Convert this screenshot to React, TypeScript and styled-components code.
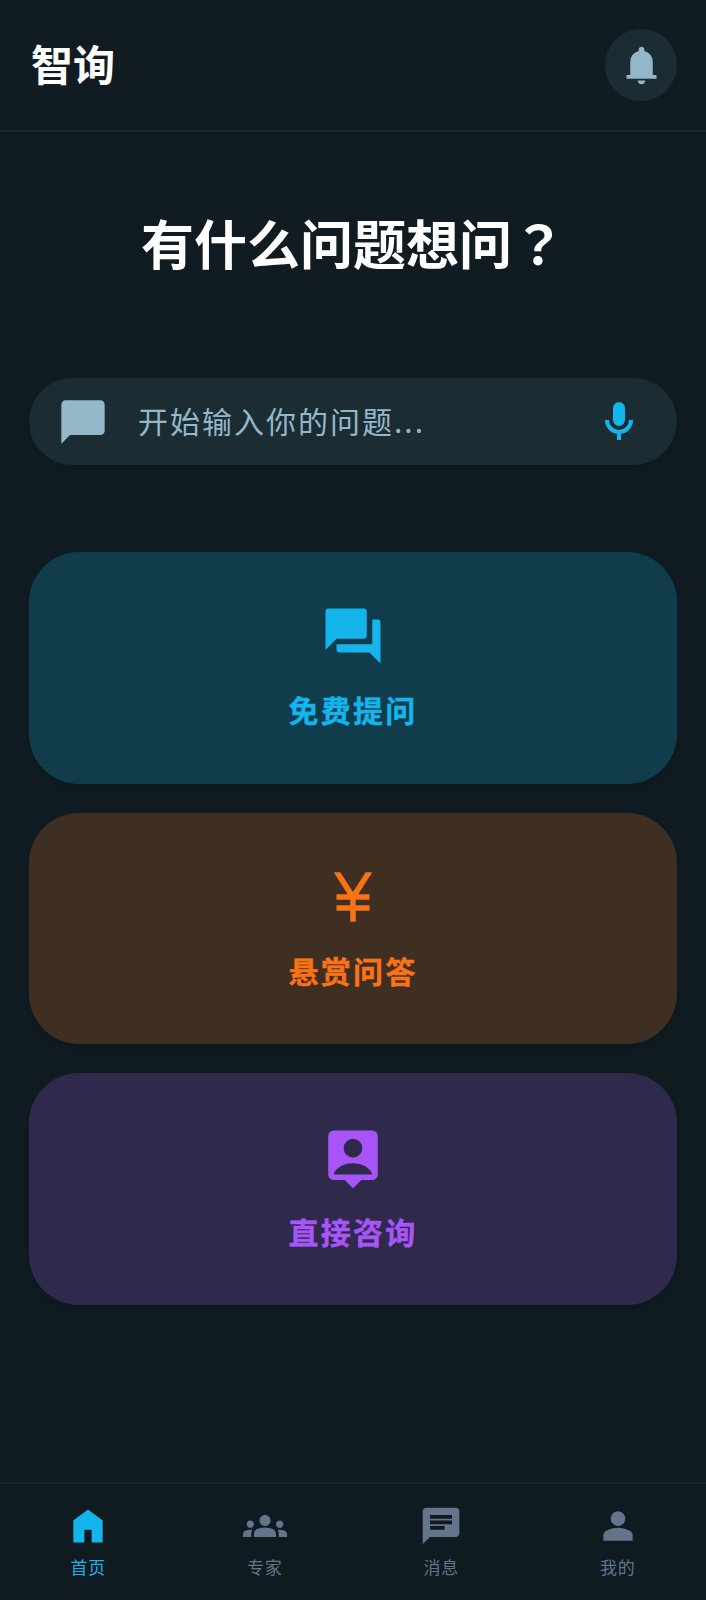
import React from "react";
import styled, { createGlobalStyle } from "styled-components";

const Global = createGlobalStyle`
  html, body { margin: 0; padding: 0; background: #101c22; }
  body { font-family: "Noto Sans CJK SC", "Noto Sans", sans-serif; }
`;

const Page = styled.div`
  width: 706px;
  height: 1600px;
  display: flex;
  flex-direction: column;
  background: #101c22;
  overflow: hidden;
`;

const Header = styled.header`
  height: 132px;
  flex: none;
  box-sizing: border-box;
  display: flex;
  align-items: center;
  justify-content: space-between;
  padding: 0 29px 0 31px;
  border-bottom: 2px solid #1a282e;
`;

const Brand = styled.h1`
  margin: 0 0 4px;
  font-size: 42px;
  line-height: 58px;
  font-weight: 700;
  color: #fff;
`;

const BellButton = styled.div`
  width: 72px;
  height: 72px;
  border-radius: 50%;
  background: #1c2c33;
  display: flex;
  align-items: center;
  justify-content: center;
`;

const Main = styled.main`
  flex: 1;
  padding: 0 29px;
  display: flex;
  flex-direction: column;
`;

const Title = styled.h2`
  margin: 74px 0 0;
  text-align: center;
  font-size: 53px;
  line-height: 72px;
  font-weight: 700;
  color: #fff;
`;

const TitleMark = styled.span`
  font-family: "Noto Sans CJK TC", "Noto Sans", sans-serif;
`;

const SearchBox = styled.div`
  margin-top: 100px;
  height: 87px;
  border-radius: 44px;
  background: #1c2c33;
  box-shadow: 0 4px 12px rgba(0, 0, 0, 0.12);
  display: flex;
  align-items: center;
  padding: 0 34px 0 28px;
`;

const Placeholder = styled.span`
  flex: 1;
  margin-left: 29px;
  padding-bottom: 3px;
  font-size: 30px;
  line-height: 44px;
  letter-spacing: 2px;
  color: #92b8c9;
`;

const Cards = styled.div`
  margin-top: 87px;
  display: flex;
  flex-direction: column;
  gap: 29px;
`;

const Card = styled.div<{ $bg: string; $fg: string }>`
  height: 231.7px;
  border-radius: 50px;
  background: ${(p) => p.$bg};
  color: ${(p) => p.$fg};
  box-shadow: 0 6px 14px rgba(0, 0, 0, 0.14);
  display: flex;
  flex-direction: column;
  align-items: center;
  justify-content: center;
  gap: 20px;
`;

const CardLabel = styled.span`
  margin-top: -3px;
  font-size: 30px;
  line-height: 46px;
  font-weight: 700;
  letter-spacing: 2.3px;
  -webkit-text-stroke: 0.4px currentColor;
`;

const Nav = styled.nav`
  height: 118px;
  flex: none;
  box-sizing: border-box;
  border-top: 2px solid #1a282e;
  display: flex;
  background: #0f1b20;
`;

const NavItem = styled.div<{ $active?: boolean }>`
  flex: 1;
  display: flex;
  flex-direction: column;
  align-items: center;
  padding-top: 20px;
  color: ${(p) => (p.$active ? "#13b5ec" : "#64748b")};
`;

const NavLabel = styled.span`
  font-size: 17px;
  line-height: 26px;
  letter-spacing: 0.8px;
  margin-top: 6px;
`;

const Icon = ({ size, d, color }: { size: number; d: string; color?: string }) => (
  <svg width={size} height={size} viewBox="0 0 24 24" fill={color ?? "currentColor"} fillRule="evenodd">
    <path d={d} />
  </svg>
);

const BELL = "M4 19v-2h2v-7q0-2.075 1.25-3.687T10.5 4.2v-.7q0-.625.438-1.062T12 2t1.063.438T13.5 3.5v.7q2 .5 3.25 2.113T18 10v7h2v2zm8 3q-.825 0-1.412-.587T10 20h4q0 .825-.587 1.413T12 22";
const CHAT = "M2 22V4q0-.825.588-1.412T4 2h16q.825 0 1.413.588T22 4v12q0 .825-.587 1.413T20 18H6z";
const MIC = "M12 14q-1.25 0-2.125-.875T9 11V5q0-1.25.875-2.125T12 2t2.125.875T15 5v6q0 1.25-.875 2.125T12 14m-1 7v-3.075q-2.6-.35-4.3-2.325T5 11h2q0 2.075 1.463 3.538T12 16t3.538-1.463T17 11h2q0 2.625-1.7 4.6T13 17.925V21z";
const FORUM = "M7 18q-.425 0-.712-.288T6 17v-2h13V6h2q.425 0 .713.288T22 7v15l-4-4zm-5-1V3q0-.425.288-.712T3 2h13q.425 0 .713.288T17 3v9q0 .425-.288.713T16 13H6z";
const YEN = "M13.92 11H18v2h-5v2h5v2h-5v4h-2v-4H6v-2h5v-2H6v-2h4.08L5 3h2.4L12 10.2 16.6 3H19z";
const CONTACT = "M5 2h14a2 2 0 0 1 2 2v14a2 2 0 0 1-2 2h-4l-3 3-3-3H5a2 2 0 0 1-2-2V4a2 2 0 0 1 2-2zM12 5a3.4 3.4 0 1 0 0 6.8 3.4 3.4 0 0 0 0-6.8zM4.9 18c.9-2.5 3.8-4.1 7.1-4.1s6.2 1.6 7.1 4.1z";
const HOME = "M4 21V9l8-6 8 6v12h-6v-7h-4v7z";
const GROUPS = "M12 12.75c1.63 0 3.07.39 4.24.9 1.08.48 1.76 1.56 1.76 2.73V18H6v-1.61c0-1.18.68-2.26 1.76-2.73 1.17-.52 2.61-.91 4.24-.91zM4 13c1.1 0 2-.9 2-2s-.9-2-2-2-2 .9-2 2 .9 2 2 2zm1.13 1.1c-.37-.06-.74-.1-1.13-.1-.99 0-1.93.21-2.78.58C.48 14.9 0 15.62 0 16.43V18h4.5v-1.61c0-.83.23-1.61.63-2.29zM20 13c1.1 0 2-.9 2-2s-.9-2-2-2-2 .9-2 2 .9 2 2 2zm4 3.43c0-.81-.48-1.53-1.22-1.85-.85-.37-1.79-.58-2.78-.58-.39 0-.76.04-1.13.1.4.68.63 1.46.63 2.29V18H24v-1.57zM12 6c1.66 0 3 1.34 3 3s-1.34 3-3 3-3-1.34-3-3 1.34-3 3-3z";
const MESSAGE = "M6 14h8v-2H6zm0-3h12V9H6zm0-3h12V6H6zM2 22V4q0-.825.588-1.412T4 2h16q.825 0 1.413.588T22 4v12q0 .825-.587 1.413T20 18H6z";
const PERSON = "M12 12q-1.65 0-2.825-1.175T8 8t1.175-2.825T12 4t2.825 1.175T16 8t-1.175 2.825T12 12m-8 8v-2.8q0-.85.438-1.562T5.6 14.55q1.55-.775 3.15-1.162T12 13t3.25.388 3.15 1.162q.725.375 1.163 1.088T20 17.2V20z";

export default function App() {
  return (
    <Page>
      <Global />
      <Header>
        <Brand>智询</Brand>
        <BellButton>
          <Icon size={45} d={BELL} color="#92b8c9" />
        </BellButton>
      </Header>
      <Main>
        <Title>
          有什么问题想问<TitleMark>？</TitleMark>
        </Title>
        <SearchBox>
          <Icon size={52} d={CHAT} color="#92b8c9" />
          <Placeholder>开始输入你的问题...</Placeholder>
          <Icon size={48} d={MIC} color="#13b5ec" />
        </SearchBox>
        <Cards>
          <Card $bg="#113c4c" $fg="#13b5ec">
            <Icon size={66} d={FORUM} />
            <CardLabel>免费提问</CardLabel>
          </Card>
          <Card $bg="#3f2f22" $fg="#f97316">
            <Icon size={66} d={YEN} />
            <CardLabel>悬赏问答</CardLabel>
          </Card>
          <Card $bg="#2f2a4c" $fg="#a855f7">
            <Icon size={66} d={CONTACT} />
            <CardLabel>直接咨询</CardLabel>
          </Card>
        </Cards>
      </Main>
      <Nav>
        <NavItem $active>
          <Icon size={44} d={HOME} />
          <NavLabel>首页</NavLabel>
        </NavItem>
        <NavItem>
          <Icon size={44} d={GROUPS} />
          <NavLabel>专家</NavLabel>
        </NavItem>
        <NavItem>
          <Icon size={44} d={MESSAGE} />
          <NavLabel>消息</NavLabel>
        </NavItem>
        <NavItem>
          <Icon size={44} d={PERSON} />
          <NavLabel>我的</NavLabel>
        </NavItem>
      </Nav>
    </Page>
  );
}
